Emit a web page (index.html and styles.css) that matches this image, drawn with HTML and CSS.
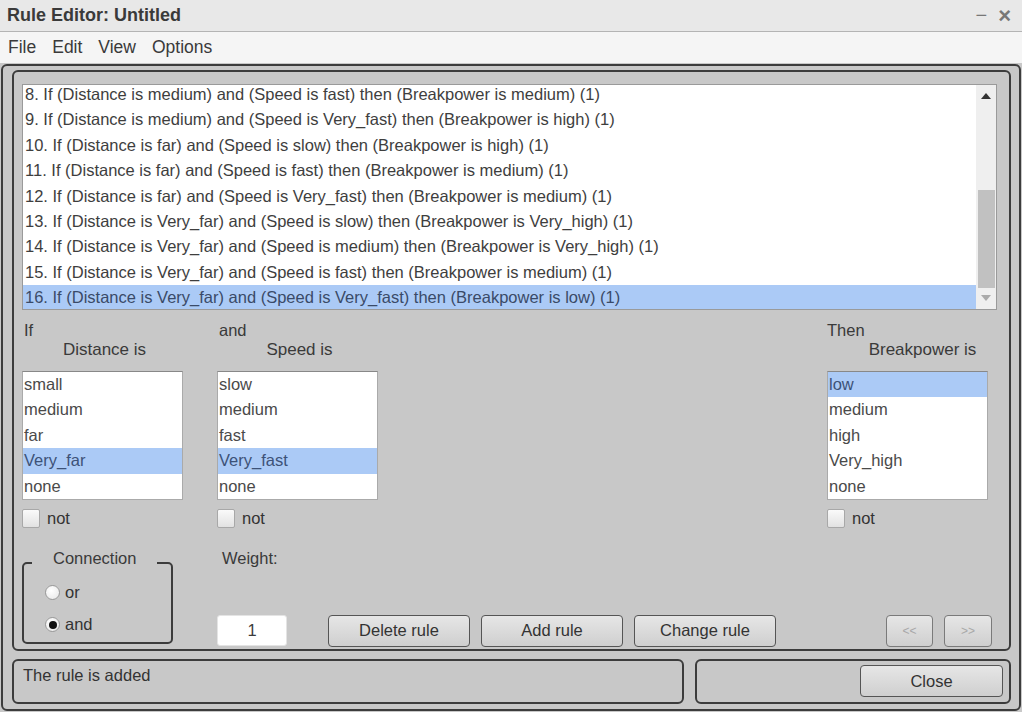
FILE: index.html
```html
<!DOCTYPE html>
<html>
<head>
<meta charset="utf-8">
<title>Rule Editor: Untitled</title>
<link rel="stylesheet" href="styles.css">
</head>
<body>
<div class="window">
  <div class="titlebar">
    <span class="title">Rule Editor: Untitled</span>
    <span class="winctrl"><span class="min">−</span><span class="close-x">×</span></span>
  </div>
  <div class="menubar">
    <span>File</span><span>Edit</span><span>View</span><span>Options</span>
  </div>
  <div class="content">
    <div class="mainpanel">
      <div class="rulelist">
        <div class="rules">
          <div class="rows">
            <div class="row">8. If (Distance is medium) and (Speed is fast) then (Breakpower is medium) (1)</div>
            <div class="row">9. If (Distance is medium) and (Speed is Very_fast) then (Breakpower is high) (1)</div>
            <div class="row">10. If (Distance is far) and (Speed is slow) then (Breakpower is high) (1)</div>
            <div class="row">11. If (Distance is far) and (Speed is fast) then (Breakpower is medium) (1)</div>
            <div class="row">12. If (Distance is far) and (Speed is Very_fast) then (Breakpower is medium) (1)</div>
            <div class="row">13. If (Distance is Very_far) and (Speed is slow) then (Breakpower is Very_high) (1)</div>
            <div class="row">14. If (Distance is Very_far) and (Speed is medium) then (Breakpower is Very_high) (1)</div>
            <div class="row">15. If (Distance is Very_far) and (Speed is fast) then (Breakpower is medium) (1)</div>
            <div class="row sel">16. If (Distance is Very_far) and (Speed is Very_fast) then (Breakpower is low) (1)</div>
          </div>
        </div>
        <div class="scrollbar">
          <div class="arrow up"></div>
          <div class="track"><div class="thumb"></div></div>
          <div class="arrow down"></div>
        </div>
      </div>

      <div class="selectors">
        <div class="col">
          <div class="lead">If</div>
          <div class="varname">Distance is</div>
          <div class="listbox">
            <div class="item">small</div>
            <div class="item">medium</div>
            <div class="item">far</div>
            <div class="item sel">Very_far</div>
            <div class="item">none</div>
          </div>
          <div class="notrow"><span class="check"></span><span>not</span></div>
        </div>
        <div class="col">
          <div class="lead">and</div>
          <div class="varname">Speed is</div>
          <div class="listbox">
            <div class="item">slow</div>
            <div class="item">medium</div>
            <div class="item">fast</div>
            <div class="item sel">Very_fast</div>
            <div class="item">none</div>
          </div>
          <div class="notrow"><span class="check"></span><span>not</span></div>
        </div>
        <div class="spacer"></div>
        <div class="col">
          <div class="lead third">Then</div>
          <div class="varname out">Breakpower is</div>
          <div class="listbox">
            <div class="item sel">low</div>
            <div class="item">medium</div>
            <div class="item">high</div>
            <div class="item">Very_high</div>
            <div class="item">none</div>
          </div>
          <div class="notrow"><span class="check"></span><span>not</span></div>
        </div>
      </div>

      <div class="bottomrow">
        <fieldset class="connection">
          <legend>Connection</legend>
          <div class="radio"><span class="dot"></span><span>or</span></div>
          <div class="radio"><span class="dot on"></span><span>and</span></div>
        </fieldset>
        <div class="weight">
          <div class="wlabel">Weight:</div>
          <div class="winput">1</div>
        </div>
        <div class="actions">
          <button class="btn">Delete rule</button>
          <button class="btn">Add rule</button>
          <button class="btn">Change rule</button>
        </div>
        <div class="nav">
          <button class="btn small dis">&lt;&lt;</button>
          <button class="btn small dis wide">&gt;&gt;</button>
        </div>
      </div>
    </div>

    <div class="statusrow">
      <div class="status">The rule is added</div>
      <div class="closepanel"><button class="btn closebtn">Close</button></div>
    </div>
  </div>
</div>
</body>
</html>
```

FILE: styles.css
```css
* { box-sizing: border-box; }
html, body { margin: 0; padding: 0; }
body {
  width: 1022px;
  height: 712px;
  overflow: hidden;
  background: #c8c8c8;
  font-family: "Liberation Sans", Arial, sans-serif;
  color: #3c3c3c;
}
.window { width: 1022px; height: 712px; display: flex; flex-direction: column; }

.titlebar {
  height: 32px;
  background: #e8e8e8;
  border-bottom: 1px solid #b4b4b4;
  display: flex;
  align-items: center;
  justify-content: space-between;
  padding: 0 11px 0 7px;
}
.title { font-weight: bold; font-size: 18px; color: #3a3a3a; }
.winctrl { display: flex; gap: 11px; color: #777; font-size: 20px; line-height: 1; }
.close-x { font-size: 22px; font-weight: bold; }

.menubar {
  height: 31px;
  background: #f5f5f5;
  display: flex;
  align-items: center;
  gap: 16px;
  padding: 0 8px;
  font-size: 17.5px;
  color: #3a3a3a;
}

.content {
  flex: 1;
  margin: 1px;
  border: 2px solid #3c3c3c;
  border-radius: 6px;
  padding: 4px 8px 5px 9px;
  display: flex;
  flex-direction: column;
  gap: 8px;
}

.mainpanel {
  height: 581px;
  border: 2px solid #3c3c3c;
  border-radius: 6px;
  padding: 12px 12px 0 8px;
  display: flex;
  flex-direction: column;
}

.rulelist {
  height: 226px;
  border: 1px solid #9a9a9a;
  background: #fff;
  display: flex;
}
.rules { flex: 1; overflow: hidden; }
.rows { margin-top: -3px; }
.row {
  height: 25.4px;
  line-height: 25.4px;
  font-size: 16.5px;
  padding-left: 2px;
  white-space: nowrap;
  color: #3e3e3e;
}
.row.sel { background: #abcaf6; color: #3a4a68; }

.scrollbar {
  width: 20px;
  background: #efefef;
  display: flex;
  flex-direction: column;
  align-items: center;
}
.arrow { width: 0; height: 0; border-left: 5px solid transparent; border-right: 5px solid transparent; }
.arrow.up { border-bottom: 6px solid #333; margin: 8px 0 7px; }
.arrow.down { border-top: 6px solid #aaa; margin: 7px 0 8px; }
.track { flex: 1; width: 100%; display: flex; flex-direction: column; justify-content: flex-end; padding: 0 1px 0 2px; }
.thumb { height: 98px; background: #c1c1c1; }

.selectors {
  display: grid;
  grid-template-columns: 161px 161px 1fr 161px;
  column-gap: 34px;
  margin-right: 9px;
  margin-top: 10px;
}
.col { display: flex; flex-direction: column; }
.lead { font-size: 16.5px; line-height: 20px; padding-left: 2px; color: #3a3a3a; }
.lead.third { padding-left: 0; }
.varname { font-size: 17px; line-height: 20px; text-align: center; padding-left: 4px; color: #3a3a3a; }
.varname.out { padding-left: 30px; }
.listbox {
  margin-top: 11px;
  background: #fff;
  border-top: 1px solid #888;
  border-left: 1px solid #aaa;
  border-right: 1px solid #aaa;
  border-bottom: 1px solid #aaa;
}
.item { height: 25.4px; line-height: 25.4px; font-size: 16.5px; padding-left: 1px; color: #4a4a4a; }
.item.sel { background: #abcaf6; color: #3d5278; }

.notrow { display: flex; align-items: center; gap: 7px; margin-top: 9px; font-size: 16.5px; color: #333; }
.check {
  width: 18px; height: 19px;
  border: 1px solid #a8a8a8;
  border-radius: 2px;
  background: linear-gradient(#fafafa, #e2e2e2);
}

.bottomrow {
  display: flex;
  align-items: flex-start;
  margin-top: 21px;
}
.connection {
  margin: 0;
  min-width: 0;
  width: 151px;
  flex: none;
  height: 95px;
  border: 2px solid #3c3c3c;
  border-radius: 5px;
  padding: 7px 0 0 8px;
  display: flex;
  flex-direction: column;
  gap: 14px;
}
.connection legend {
  font-size: 16.5px;
  line-height: 18px;
  color: #3a3a3a;
  margin-left: 0;
  padding: 0 21px 10px;
}
.radio { display: flex; align-items: center; gap: 5px; height: 18px; margin-left: 13px; font-size: 16.5px; color: #333; }
.dot {
  width: 15px; height: 15px; border-radius: 50%;
  border: 1px solid #999;
  background: radial-gradient(circle at 40% 35%, #fff, #e6e6e6);
  display: flex; align-items: center; justify-content: center;
}
.dot.on::after { content: ""; width: 8px; height: 8px; border-radius: 50%; background: #111; }

.weight { margin-left: 44px; display: flex; flex-direction: column; }
.wlabel { font-size: 16.5px; line-height: 18px; color: #3a3a3a; padding-left: 5px; }
.winput {
  margin-top: 48px;
  width: 70px; height: 31px;
  background: #fff;
  border-radius: 3px;
  border: 1px solid #e4e4e4;
  font-size: 16.5px;
  display: flex; align-items: center; justify-content: center;
}
.actions { display: flex; gap: 11px; margin-left: 41px; margin-top: 66px; }
.btn {
  font-family: "Liberation Sans", Arial, sans-serif;
  font-size: 16.5px;
  color: #333;
  height: 32px;
  width: 142px;
  border: 1px solid #555;
  border-radius: 4px;
  background: linear-gradient(#e6e6e6, #cfcfcf);
  padding: 0;
}
.nav { display: flex; gap: 11px; margin-left: auto; margin-right: 5px; margin-top: 66px; }
.btn.small { width: 47px; }
.btn.small.wide { width: 48px; }
.btn.dis { color: #a8a8a8; border-color: #7a7a7a; font-size: 12px; }

.statusrow { flex: 1; display: flex; gap: 11px; }
.status {
  width: 672px;
  border: 2px solid #3c3c3c;
  border-radius: 6px;
  padding: 5px 9px;
  font-size: 16.5px;
  color: #333;
}
.closepanel {
  flex: 1;
  border: 2px solid #3c3c3c;
  border-radius: 6px;
  display: flex;
  justify-content: flex-end;
  align-items: flex-start;
  padding: 4px 6px 0 0;
}
.closebtn { width: 143px; height: 32px; }
```
